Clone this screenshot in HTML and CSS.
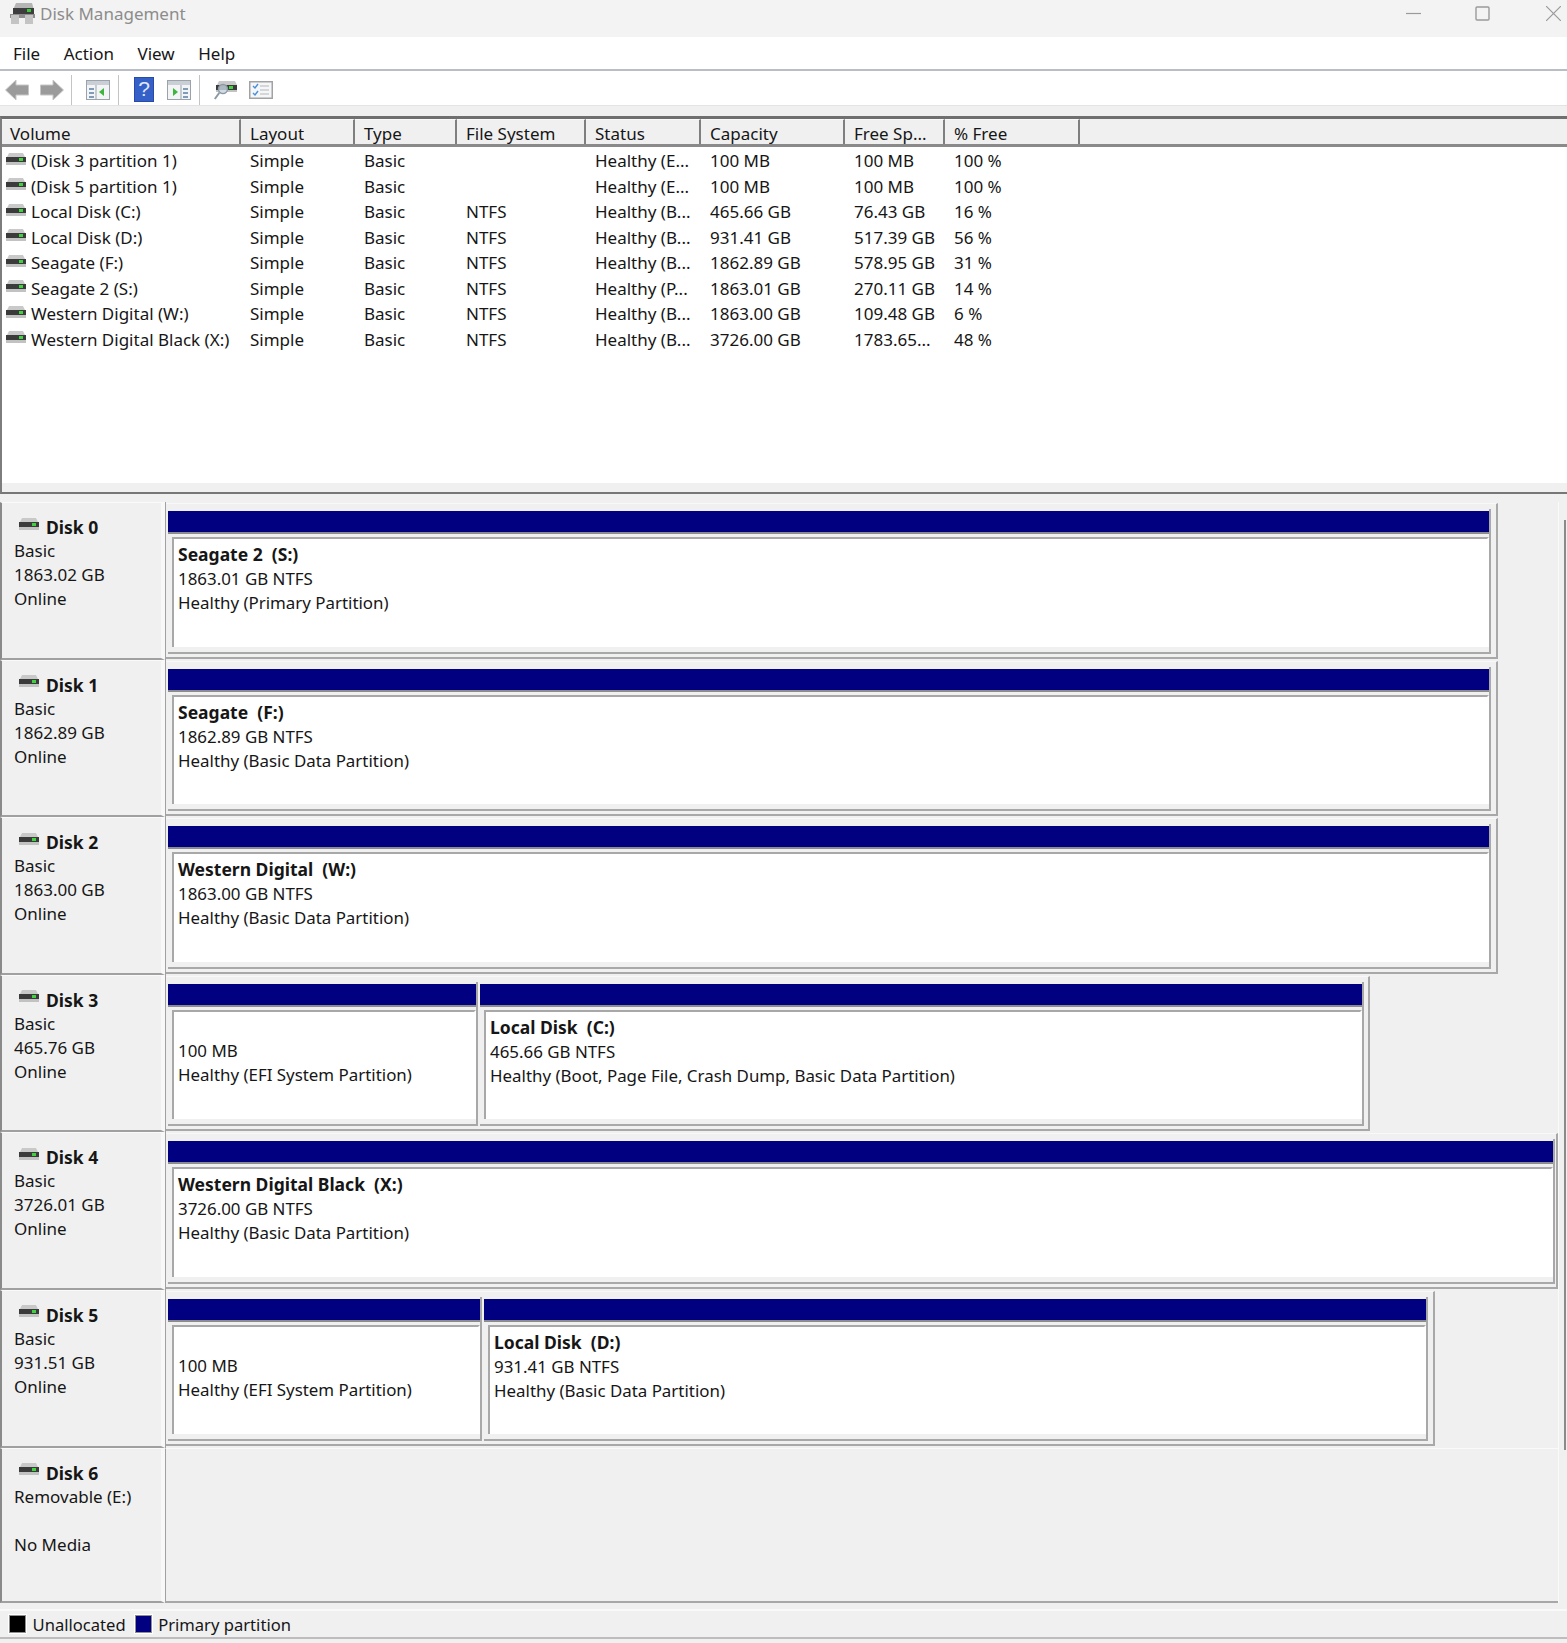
FILE: index.html
```html
<!DOCTYPE html>
<html lang="en">
<head>
    <meta charset="UTF-8">
    <title>Disk Management</title>
    <link rel="stylesheet" href="styles.css">
</head>
<body>

<svg class="defs" width="0" height="0">
    <symbol id="disk" viewBox="0 0 20 12">
        <path d="M1 4 L3 0 H17 L19 4 Z" fill="#c9c9c9"/>
        <rect x="0" y="4" width="20" height="5" fill="#3b3b3b"/>
        <rect x="13" y="5" width="4" height="3" fill="#3fd23f"/>
        <rect x="0" y="9" width="20" height="3" fill="#c2c2c2"/>
    </symbol>
</svg>

<div class="app">
    <div class="titlebar">
        <svg class="title-icon" width="25" height="22" viewBox="0 0 25 22">
            <path d="M3 8 L6 1 H22 L24 8 V12 H3 Z" fill="#b5b5b5"/>
            <rect x="3" y="6" width="21" height="6" fill="#3d3d3d"/>
            <rect x="17" y="7" width="4" height="3" fill="#39c639"/>
            <rect x="0" y="12" width="25" height="4" fill="#8e8e8e"/>
            <rect x="1" y="13" width="8" height="9" fill="#c4c4c4"/>
            <rect x="15" y="13" width="8" height="9" fill="#c4c4c4"/>
        </svg>
        <span class="title-text">Disk Management</span>
        <div class="window-controls">
            <svg width="15" height="15" viewBox="0 0 15 15"><path d="M0 7.5 H15" stroke="#9a9a9a" stroke-width="1.2"/></svg>
            <svg class="ctl-max" width="15" height="15" viewBox="0 0 15 15"><rect x="1" y="1" width="13" height="13" rx="1" fill="none" stroke="#9a9a9a" stroke-width="1.4"/></svg>
            <svg class="ctl-close" width="15" height="15" viewBox="0 0 15 15"><path d="M0 0 L15 15 M15 0 L0 15" stroke="#9a9a9a" stroke-width="1.2"/></svg>
        </div>
    </div>

    <div class="menubar">
        <span class="menu-item">File</span>
        <span class="menu-item">Action</span>
        <span class="menu-item">View</span>
        <span class="menu-item">Help</span>
    </div>

    <div class="toolbar">
        <svg class="tool tool-back" width="24" height="22" viewBox="0 0 24 22"><path d="M0.5 11 L11 1 V6 H23.5 V16 H11 V21 Z" fill="#9b9b9b" stroke="#c6c6c6"/></svg>
        <svg class="tool tool-forward" width="24" height="22" viewBox="0 0 24 22"><path d="M23.5 11 L13 1 V6 H0.5 V16 H13 V21 Z" fill="#9b9b9b" stroke="#c6c6c6"/></svg>
        <span class="tool-sep sep-a"></span>
        <svg class="tool tool-pane" width="24" height="20" viewBox="0 0 24 20">
            <rect x="0.5" y="0.5" width="23" height="19" fill="#f2f4f6" stroke="#9aa3ab"/>
            <rect x="1" y="1" width="22" height="4" fill="#c9cfd5"/>
            <rect x="3" y="8" width="5" height="2" fill="#7f9bb8"/>
            <rect x="3" y="12" width="5" height="2" fill="#7f9bb8"/>
            <rect x="3" y="16" width="5" height="2" fill="#7f9bb8"/>
            <path d="M10 5 V19" stroke="#9aa3ab"/>
            <path d="M13 12 L18 8 V16 Z" fill="#3fb53f"/>
        </svg>
        <span class="tool-sep sep-b"></span>
        <svg class="tool tool-help" width="20" height="25" viewBox="0 0 20 25">
            <rect width="20" height="25" fill="#2a4aa8"/>
            <rect x="1" y="1" width="18" height="23" fill="#3560c8"/>
            <text x="10" y="19" text-anchor="middle" class="help-mark">?</text>
        </svg>
        <svg class="tool tool-pane2" width="24" height="20" viewBox="0 0 24 20">
            <rect x="0.5" y="0.5" width="23" height="19" fill="#f2f4f6" stroke="#9aa3ab"/>
            <rect x="1" y="1" width="22" height="4" fill="#c9cfd5"/>
            <rect x="16" y="8" width="5" height="2" fill="#7f9bb8"/>
            <rect x="16" y="12" width="5" height="2" fill="#7f9bb8"/>
            <rect x="16" y="16" width="5" height="2" fill="#7f9bb8"/>
            <path d="M14 5 V19" stroke="#9aa3ab"/>
            <path d="M11 12 L6 8 V16 Z" fill="#3fb53f"/>
        </svg>
        <span class="tool-sep sep-c"></span>
        <svg class="tool tool-scan" width="23" height="20" viewBox="0 0 23 20">
            <path d="M3 5 L5 1 H21 L23 5 Z" fill="#c9c9c9"/>
            <rect x="2" y="5" width="21" height="5" fill="#3b3b3b"/>
            <rect x="15" y="6" width="4" height="3" fill="#3fd23f"/>
            <rect x="2" y="10" width="21" height="2" fill="#c2c2c2"/>
            <circle cx="9" cy="9" r="4.5" fill="#d5e3ee" fill-opacity="0.75" stroke="#8c9aa6" stroke-width="1.4"/>
            <path d="M5.5 12.5 L0.8 19" stroke="#8c9aa6" stroke-width="2"/>
        </svg>
        <svg class="tool tool-check" width="24" height="18" viewBox="0 0 24 18">
            <rect x="0.75" y="0.75" width="22.5" height="16.5" fill="#f4f6f8" stroke="#a2a2a2" stroke-width="1.5"/>
            <path d="M4 5 L6 7 L9 3 M4 12 L6 14 L9 10" fill="none" stroke="#4a90d9" stroke-width="1.4"/>
            <path d="M11 5 H20 M11 9 H20 M11 13 H20" stroke="#b5b5b5" stroke-width="1.2"/>
        </svg>
    </div>

    <div class="list-pane">
        <div class="list-row list-head">
            <div class="cell">Volume</div>
            <div class="cell">Layout</div>
            <div class="cell">Type</div>
            <div class="cell">File System</div>
            <div class="cell">Status</div>
            <div class="cell">Capacity</div>
            <div class="cell">Free Sp...</div>
            <div class="cell">% Free</div>
        </div>
        <div class="list-body">
            <div class="list-row">
                <div class="cell vol"><svg class="disk-icon"><use href="#disk"/></svg>(Disk 3 partition 1)</div>
                <div class="cell">Simple</div><div class="cell">Basic</div><div class="cell"></div>
                <div class="cell">Healthy (E...</div><div class="cell">100 MB</div><div class="cell">100 MB</div><div class="cell">100 %</div>
            </div>
            <div class="list-row">
                <div class="cell vol"><svg class="disk-icon"><use href="#disk"/></svg>(Disk 5 partition 1)</div>
                <div class="cell">Simple</div><div class="cell">Basic</div><div class="cell"></div>
                <div class="cell">Healthy (E...</div><div class="cell">100 MB</div><div class="cell">100 MB</div><div class="cell">100 %</div>
            </div>
            <div class="list-row">
                <div class="cell vol"><svg class="disk-icon"><use href="#disk"/></svg>Local Disk (C:)</div>
                <div class="cell">Simple</div><div class="cell">Basic</div><div class="cell">NTFS</div>
                <div class="cell">Healthy (B...</div><div class="cell">465.66 GB</div><div class="cell">76.43 GB</div><div class="cell">16 %</div>
            </div>
            <div class="list-row">
                <div class="cell vol"><svg class="disk-icon"><use href="#disk"/></svg>Local Disk (D:)</div>
                <div class="cell">Simple</div><div class="cell">Basic</div><div class="cell">NTFS</div>
                <div class="cell">Healthy (B...</div><div class="cell">931.41 GB</div><div class="cell">517.39 GB</div><div class="cell">56 %</div>
            </div>
            <div class="list-row">
                <div class="cell vol"><svg class="disk-icon"><use href="#disk"/></svg>Seagate (F:)</div>
                <div class="cell">Simple</div><div class="cell">Basic</div><div class="cell">NTFS</div>
                <div class="cell">Healthy (B...</div><div class="cell">1862.89 GB</div><div class="cell">578.95 GB</div><div class="cell">31 %</div>
            </div>
            <div class="list-row">
                <div class="cell vol"><svg class="disk-icon"><use href="#disk"/></svg>Seagate 2 (S:)</div>
                <div class="cell">Simple</div><div class="cell">Basic</div><div class="cell">NTFS</div>
                <div class="cell">Healthy (P...</div><div class="cell">1863.01 GB</div><div class="cell">270.11 GB</div><div class="cell">14 %</div>
            </div>
            <div class="list-row">
                <div class="cell vol"><svg class="disk-icon"><use href="#disk"/></svg>Western Digital (W:)</div>
                <div class="cell">Simple</div><div class="cell">Basic</div><div class="cell">NTFS</div>
                <div class="cell">Healthy (B...</div><div class="cell">1863.00 GB</div><div class="cell">109.48 GB</div><div class="cell">6 %</div>
            </div>
            <div class="list-row">
                <div class="cell vol"><svg class="disk-icon"><use href="#disk"/></svg>Western Digital Black (X:)</div>
                <div class="cell">Simple</div><div class="cell">Basic</div><div class="cell">NTFS</div>
                <div class="cell">Healthy (B...</div><div class="cell">3726.00 GB</div><div class="cell">1783.65...</div><div class="cell">48 %</div>
            </div>
        </div>
        <div class="list-foot"></div>
    </div>

    <div class="disk-pane">
        <div class="disk-rows">
            <div class="disk-row">
                <div class="disk-label">
                    <div class="disk-name"><svg class="disk-icon"><use href="#disk"/></svg><b>Disk 0</b></div>
                    <div>Basic</div><div>1863.02 GB</div><div>Online</div>
                </div>
                <div class="disk-map">
                    <div class="frame frame-wide">
                        <div class="part part-fill">
                            <div class="part-bar"></div>
                            <div class="part-box">
                                <div><b>Seagate 2&nbsp; (S:)</b></div>
                                <div>1863.01 GB NTFS</div>
                                <div>Healthy (Primary Partition)</div>
                            </div>
                        </div>
                    </div>
                </div>
            </div>

            <div class="disk-row">
                <div class="disk-label">
                    <div class="disk-name"><svg class="disk-icon"><use href="#disk"/></svg><b>Disk 1</b></div>
                    <div>Basic</div><div>1862.89 GB</div><div>Online</div>
                </div>
                <div class="disk-map">
                    <div class="frame frame-wide">
                        <div class="part part-fill">
                            <div class="part-bar"></div>
                            <div class="part-box">
                                <div><b>Seagate&nbsp; (F:)</b></div>
                                <div>1862.89 GB NTFS</div>
                                <div>Healthy (Basic Data Partition)</div>
                            </div>
                        </div>
                    </div>
                </div>
            </div>

            <div class="disk-row">
                <div class="disk-label">
                    <div class="disk-name"><svg class="disk-icon"><use href="#disk"/></svg><b>Disk 2</b></div>
                    <div>Basic</div><div>1863.00 GB</div><div>Online</div>
                </div>
                <div class="disk-map">
                    <div class="frame frame-wide">
                        <div class="part part-fill">
                            <div class="part-bar"></div>
                            <div class="part-box">
                                <div><b>Western Digital&nbsp; (W:)</b></div>
                                <div>1863.00 GB NTFS</div>
                                <div>Healthy (Basic Data Partition)</div>
                            </div>
                        </div>
                    </div>
                </div>
            </div>

            <div class="disk-row">
                <div class="disk-label">
                    <div class="disk-name"><svg class="disk-icon"><use href="#disk"/></svg><b>Disk 3</b></div>
                    <div>Basic</div><div>465.76 GB</div><div>Online</div>
                </div>
                <div class="disk-map">
                    <div class="frame frame-d3">
                        <div class="part part-efi3">
                            <div class="part-bar"></div>
                            <div class="part-box">
                                <div>&nbsp;</div>
                                <div>100 MB</div>
                                <div>Healthy (EFI System Partition)</div>
                            </div>
                        </div>
                        <div class="part part-fill">
                            <div class="part-bar"></div>
                            <div class="part-box">
                                <div><b>Local Disk&nbsp; (C:)</b></div>
                                <div>465.66 GB NTFS</div>
                                <div>Healthy (Boot, Page File, Crash Dump, Basic Data Partition)</div>
                            </div>
                        </div>
                    </div>
                </div>
            </div>

            <div class="disk-row">
                <div class="disk-label">
                    <div class="disk-name"><svg class="disk-icon"><use href="#disk"/></svg><b>Disk 4</b></div>
                    <div>Basic</div><div>3726.01 GB</div><div>Online</div>
                </div>
                <div class="disk-map">
                    <div class="frame frame-d4">
                        <div class="part part-fill">
                            <div class="part-bar"></div>
                            <div class="part-box">
                                <div><b>Western Digital Black&nbsp; (X:)</b></div>
                                <div>3726.00 GB NTFS</div>
                                <div>Healthy (Basic Data Partition)</div>
                            </div>
                        </div>
                    </div>
                </div>
            </div>

            <div class="disk-row">
                <div class="disk-label">
                    <div class="disk-name"><svg class="disk-icon"><use href="#disk"/></svg><b>Disk 5</b></div>
                    <div>Basic</div><div>931.51 GB</div><div>Online</div>
                </div>
                <div class="disk-map">
                    <div class="frame frame-d5">
                        <div class="part part-efi5">
                            <div class="part-bar"></div>
                            <div class="part-box">
                                <div>&nbsp;</div>
                                <div>100 MB</div>
                                <div>Healthy (EFI System Partition)</div>
                            </div>
                        </div>
                        <div class="part part-fill">
                            <div class="part-bar"></div>
                            <div class="part-box">
                                <div><b>Local Disk&nbsp; (D:)</b></div>
                                <div>931.41 GB NTFS</div>
                                <div>Healthy (Basic Data Partition)</div>
                            </div>
                        </div>
                    </div>
                </div>
            </div>

            <div class="disk-row disk-row-last">
                <div class="disk-label">
                    <div class="disk-name"><svg class="disk-icon"><use href="#disk"/></svg><b>Disk 6</b></div>
                    <div>Removable (E:)</div><div>&nbsp;</div><div>No Media</div>
                </div>
                <div class="disk-map"></div>
            </div>
        </div>
        <div class="disk-rail"></div>
    </div>

    <div class="legend">
        <span class="swatch swatch-black"></span><span class="legend-text">Unallocated</span>
        <span class="swatch swatch-blue"></span><span class="legend-text">Primary partition</span>
    </div>
</div>

</body>
</html>
```

FILE: styles.css
```css
* {
    box-sizing: border-box;
}
body {
    margin: 0;
    background: #f0f0f0;
    font-family: "Noto Sans", "Open Sans", sans-serif;
    font-size: 17px;
    color: #161616;
}
b {
    font-weight: 700;
    font-size: 17.5px;
}
.defs {
    position: absolute;
}
.app {
    width: 1567px;
    height: 1643px;
    display: flex;
    flex-direction: column;
    overflow: hidden;
}

/* title bar */
.titlebar {
    height: 37px;
    background: #f3f3f3;
    display: flex;
    align-items: center;
    padding: 0 0 11px 10px;
}
.title-icon {
    margin-right: 5px;
}
.title-text {
    color: #8c8c8c;
    font-size: 17px;
}
.window-controls {
    margin-left: auto;
    display: flex;
    align-items: center;
    padding-right: 6px;
}
.ctl-max {
    margin-left: 54px;
}
.ctl-close {
    margin-left: 56px;
}

/* menu and toolbar */
.menubar {
    height: 34px;
    background: #fff;
    border-bottom: 2px solid #b9bdc6;
    display: flex;
    align-items: center;
    padding-left: 13px;
    gap: 23.5px;
}
.toolbar {
    height: 35px;
    background: #fff;
    border-bottom: 1px solid #e3e3e3;
    display: flex;
    align-items: center;
    padding: 3px 0 0 5px;
}
.tool-back {
    margin-right: 11px;
}
.tool-sep {
    width: 1px;
    height: 30px;
    background: #c4c4c4;
}
.sep-a {
    margin-left: 7px;
    margin-right: 14px;
}
.sep-b {
    margin-left: 8px;
    margin-right: 15px;
}
.tool-pane2 {
    margin-left: 13px;
}
.sep-c {
    margin-left: 8px;
    margin-right: 14px;
}
.tool-check {
    margin-left: 12px;
}
.help-mark {
    font-family: "Liberation Sans", sans-serif;
    font-size: 21px;
    fill: #dfe7fa;
}

/* volume list */
.list-pane {
    height: 378px;
    margin-top: 10px;
    border-top: 3px solid #6f6f6f;
    border-left: 2px solid #7d7d7d;
    border-bottom: 2px solid #777;
    display: flex;
    flex-direction: column;
}
.list-row {
    display: grid;
    grid-template-columns: 239px 114px 102px 129px 115px 144px 100px 135px;
    height: 25.5px;
    line-height: 25.5px;
}
.cell {
    padding-left: 9px;
    white-space: nowrap;
    overflow: hidden;
}
.list-head {
    height: 28px;
    line-height: 28px;
    background: #f0f0f0;
    border-bottom: 3px solid #8a8a8a;
    flex-shrink: 0;
}
.list-head .cell {
    border-right: 2px solid #7f7f7f;
    border-top: 1px solid #fafafa;
}
.list-head .cell:first-child {
    padding-left: 8px;
}
.list-body {
    flex: 1;
    background: #fff;
    padding-top: 1px;
}
.cell.vol {
    padding-left: 4px;
    display: flex;
    align-items: center;
}
.disk-icon {
    width: 20px;
    height: 12px;
    flex-shrink: 0;
}
.vol .disk-icon {
    margin-right: 5px;
    margin-top: -4px;
}
.list-foot {
    height: 9px;
    background: #f0f0f0;
}

/* disk rows */
.disk-pane {
    flex: 1;
    display: flex;
    padding-top: 8px;
    min-height: 0;
}
.disk-rows {
    width: 1559px;
    border-right: 1px solid #fafafa;
    height: 1101px;
}
.disk-rail {
    width: 2px;
    height: 930px;
    margin-top: 18px;
    margin-left: 5px;
    background: #8a8a8a;
}
.disk-row {
    display: flex;
    height: 157.6px;
}
.disk-row-last {
    height: 155px;
}
.disk-row-last .disk-map {
    border-top: 1px solid #fafafa;
    border-bottom: 2px solid #a8a8a8;
}
.disk-label {
    width: 165px;
    flex-shrink: 0;
    border-left: 2px solid #8a8a8a;
    border-top: 1px solid #fafafa;
    border-right: 4px solid #f8f8f8;
    border-bottom: 2px solid #a0a0a0;
    padding: 12px 0 0 12px;
    line-height: 24px;
}
.disk-name {
    display: flex;
    align-items: center;
}
.disk-name .disk-icon {
    margin: -7px 7px 0 5px;
}
.disk-map {
    flex: 1;
    border-left: 1px solid #a0a0a0;
}

/* partitions */
.frame {
    display: flex;
    height: 155.5px;
    margin-top: 1px;
    padding: 5px 5px 3px 2px;
    border-right: 2px solid #a8a8a8;
    border-bottom: 2px solid #a8a8a8;
    border-top: 1px solid #f8f8f8;
}
.frame-wide {
    width: 1332px;
}
.frame-d3 {
    width: 1204px;
    padding-right: 4px;
}
.frame-d4 {
    width: 1392px;
    border-right-width: 2px;
    padding-right: 1px;
}
.frame-d5 {
    width: 1269px;
}
.part {
    display: flex;
    flex-direction: column;
    padding-top: 2px;
    border-right: 2px solid #a8a8a8;
    border-bottom: 2px solid #a8a8a8;
    padding-right: 0;
}
.part-fill {
    flex: 1;
    min-width: 0;
}
.part-efi3 {
    width: 310px;
    margin-right: 2px;
}
.part-efi5 {
    width: 314px;
    margin-right: 2px;
}
.part-bar {
    height: 23px;
    background: #000080;
    border-bottom: 2px solid #8c8c8c;
    flex-shrink: 0;
}
.part-box {
    flex: 1;
    margin: 3px 0 5px 4px;
    background: #fff;
    border-top: 2px solid #a8a8a8;
    border-left: 2px solid #a8a8a8;
    border-right: 2px solid #fff;
    padding: 3px 0 0 4px;
    font-size: 16.9px;
    line-height: 24px;
    white-space: nowrap;
    overflow: hidden;
}

/* legend */
.legend {
    height: 30px;
    margin-top: 6px;
    margin-bottom: 4px;
    flex-shrink: 0;
    display: flex;
    align-items: center;
    padding-left: 9px;
    font-size: 16.6px;
    border-top: 2px solid #f9f9f9;
    border-bottom: 2px solid #bdbdbd;
}
.swatch {
    width: 17px;
    height: 18px;
    border: 1px solid #8f8f8f;
    box-shadow: 0 0 0 1px #fff;
}
.swatch-black {
    background: #000;
}
.swatch-blue {
    background: #000080;
}
.legend-text {
    margin-left: 6.5px;
    margin-right: 9px;
}
```
